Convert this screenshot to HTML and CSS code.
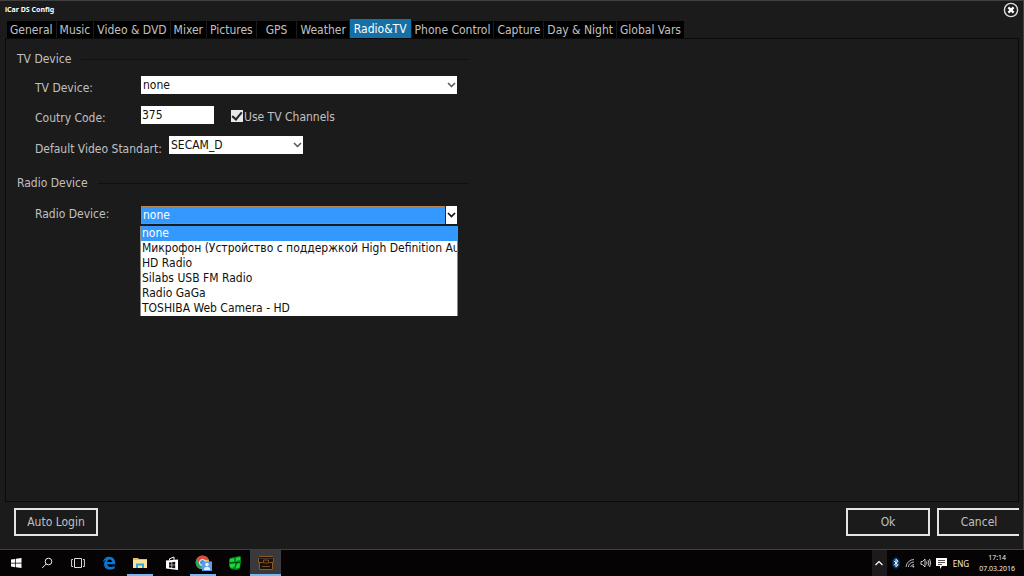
FILE: index.html
```html
<!DOCTYPE html>
<html lang="en">
<head>
<meta charset="utf-8">
<title>iCar DS Config</title>
<link rel="stylesheet" href="styles.css">
</head>
<body>
<main class="window">
  <header class="titlebar">
    <h1 class="title">iCar DS Config</h1>
    <button class="close" type="button" aria-label="Close">
      <svg viewBox="0 0 16 16" width="16" height="16" fill="none"><circle cx="8" cy="8" r="6.6" stroke="#ddd" stroke-width="1.4"/><path d="M5.4 5.4l5.2 5.2M10.6 5.4l-5.2 5.2" stroke="#fff" stroke-width="2.2"/></svg>
    </button>
  </header>
  <nav class="tabs" aria-label="Settings sections">
    <button class="tab" type="button">General</button>
    <button class="tab" type="button">Music</button>
    <button class="tab" type="button">Video &amp; DVD</button>
    <button class="tab" type="button">Mixer</button>
    <button class="tab" type="button">Pictures</button>
    <button class="tab tab-short" type="button">GPS</button>
    <button class="tab" type="button">Weather</button>
    <button class="tab tab-active" type="button" aria-current="page">Radio&amp;TV</button>
    <button class="tab" type="button">Phone Control</button>
    <button class="tab" type="button">Capture</button>
    <button class="tab" type="button">Day &amp; Night</button>
    <button class="tab" type="button">Global Vars</button>
  </nav>
  <section class="panel">
    <h2 class="group-title">TV Device</h2>
    <div class="row">
      <label class="label" for="tv">TV Device:</label>
      <div class="combo">
        <select class="select" id="tv"><option>none</option></select>
        <svg class="chevron" viewBox="0 0 9 6" width="9" height="6"><path d="M1 1l3.5 3.5L8 1" fill="none" stroke="#555" stroke-width="1.5"/></svg>
      </div>
    </div>
    <div class="row">
      <label class="label" for="code">Coutry Code:</label>
      <input class="code" id="code" type="text" value="375">
      <input class="check" id="channels" type="checkbox" checked>
      <label for="channels">Use TV Channels</label>
    </div>
    <div class="row">
      <label class="label label-wide" for="standard">Default Video Standart:</label>
      <div class="combo combo-small">
        <select class="select" id="standard"><option>SECAM_D</option></select>
        <svg class="chevron" viewBox="0 0 9 6" width="9" height="6"><path d="M1 1l3.5 3.5L8 1" fill="none" stroke="#555" stroke-width="1.5"/></svg>
      </div>
    </div>
    <h2 class="group-title group-second">Radio Device</h2>
    <div class="row row-radio">
      <label class="label" for="radio">Radio Device:</label>
      <div class="combo combo-open">
        <select class="select" id="radio"><option>none</option></select>
        <span class="arrow-box"><svg viewBox="0 0 9 6" width="9" height="6"><path d="M1 1l3.5 3.5L8 1" fill="none" stroke="#111" stroke-width="1.7"/></svg></span>
        <ul class="list" role="listbox" aria-label="Radio Device">
          <li class="item item-selected" role="option" aria-selected="true">none</li>
          <li class="item" role="option">Микрофон (Устройство с поддержкой High Definition Audio)</li>
          <li class="item" role="option">HD Radio</li>
          <li class="item" role="option">Silabs USB FM Radio</li>
          <li class="item" role="option">Radio GaGa</li>
          <li class="item" role="option">TOSHIBA Web Camera - HD</li>
        </ul>
      </div>
    </div>
  </section>
  <div class="actions">
    <button class="action" type="button">Auto Login</button>
    <span class="spacer"></span>
    <button class="action" type="button">Ok</button>
    <button class="action action-cut" type="button">Cancel</button>
  </div>
</main>
<footer class="taskbar">
  <button class="task" type="button" aria-label="Start">
    <svg viewBox="0 0 12 12" width="12" height="12" fill="#fff"><path d="M1 2.500l4.300-.6v3.800H1zM6 1.800L11.500 1v4.700H6zM1 6.400h4.300v3.800L1 9.600zM6 6.400h5.500v4.700L6 10.300z"/></svg>
  </button>
  <button class="task" type="button" aria-label="Search">
    <svg viewBox="0 0 12 12" width="12" height="12" fill="none" stroke="#eee"><circle cx="7.500" cy="4.500" r="3.300"/><path d="M5.200 6.900L1.200 11"/></svg>
  </button>
  <button class="task" type="button" aria-label="Task view">
    <svg viewBox="0 0 14 12" width="14" height="12" fill="none" stroke="#ddd"><path d="M3.500 1.500h7v9h-7zM2 2.500H.6v7H2M12 2.500h1.400v7H12"/></svg>
  </button>
  <button class="task" type="button" aria-label="Edge">
    <svg viewBox="0 0 14 14" width="14" height="14"><path d="M1 6.500C1.600 2.500 4.200.8 7.200.8c3.800 0 6 2.800 6 6v1.500H5.100c.2 2 1.800 2.700 3.700 2.700 1.400 0 2.600-.3 3.800-1v2.600c-1.300.6-2.700.9-4.300.9-3.800 0-6.200-2-6.200-5.300 0-2.200 1.100-3.800 3.100-4.700C3.300 4.100 2 4.900 1 6.500zm4.200-.4h4.700c0-1.600-.8-2.500-2.200-2.500-1.500 0-2.300 1-2.500 2.500z" fill="#0878d8"/></svg>
  </button>
  <button class="task task-running" type="button" aria-label="File Explorer">
    <svg viewBox="0 0 14 12" width="14" height="12"><path d="M0 1h5l1 1h8v9H0z" fill="#e9c15a"/><path d="M0 3h14v8H0z" fill="#fbe49a"/><path d="M3 11V6.500h8V11H9V8.500H5V11z" fill="#35a8dc"/></svg>
  </button>
  <button class="task" type="button" aria-label="Store">
    <svg viewBox="0 0 14 14" width="14" height="14"><path d="M4.500 4V2.800L9 1v3" fill="none" stroke="#fff"/><path d="M1 4.500L13 3.500V14L1 12.500z" fill="#fff"/><path d="M4 6.500l2.600-.3v2.500H4zM7.200 6.100l3-.4v3h-3zM4 9.300h2.600v2.500L4 11.500zM7.200 9.300h3v3l-3-.4z" fill="#111"/></svg>
  </button>
  <button class="task task-running" type="button" aria-label="Chrome">
    <svg viewBox="0 0 17 16" width="17" height="16"><circle cx="7.500" cy="7.500" r="6.800" fill="#f2c52e"/><path d="M1.500 4.200A6.800 6.800 0 0 1 13.900 5H7.500L4.600 9z" fill="#df4b40"/><path d="M1.500 4.200L5 10l2.500 1-1.300 3.200A6.800 6.800 0 0 1 1.500 4.200z" fill="#2ca45c"/><circle cx="7.500" cy="7.500" r="3" fill="#4a87e8" stroke="#fff"/><path d="M7 6.500h10V16H7z" fill="#5f9ce8"/><circle cx="12" cy="9.500" r="1.800" fill="#e4effc"/><path d="M8.800 15c0-4.500 6.400-4.500 6.400 0z" fill="#e4effc"/></svg>
  </button>
  <button class="task" type="button" aria-label="Media app">
    <svg viewBox="0 0 14 16" width="14" height="16"><path d="M2 3l5-1 5-1 1 1v5l-1 6-3 2-6-1-2-3V5z" fill="#068a1e"/><path d="M2 4l4-.8v3.300L2 7zM8 3l4-1v3L8 6zM2 9l5-.5v3L4 13l-2-1zM8 8.500h4l-.5 4L8 13.500z" fill="#18d83e"/><path d="M1 8l11-.8M7 12l2-4" stroke="#034d10" fill="none"/></svg>
  </button>
  <button class="task task-current" type="button" aria-label="iCar DS">
    <svg viewBox="0 0 16 16" width="16" height="16"><path d="M1 1h14v2H1zM0 4h16v4h-1v7H1V8H0z" fill="#17100b"/><path d="M1 1.500h14M.5 3.500v4h4M15.500 3.500v4h-4M1.500 7.500v7h13v-7" fill="none" stroke="#8f5826"/><path d="M5.500 5h5v3h-5zM4 11.500h8" fill="none" stroke="#7a4a20"/></svg>
  </button>
  <span class="spacer"></span>
  <div class="tray">
    <button class="tray-up" type="button" aria-label="Show hidden icons">
      <svg viewBox="0 0 8 6" width="8" height="6"><path d="M.5 5L4 1.500 7.500 5" fill="none" stroke="#fff" stroke-width="1.200"/></svg>
    </button>
    <svg viewBox="0 0 8 12" width="8" height="12"><ellipse cx="4" cy="6" rx="3.800" ry="5.800" fill="#073a70"/><path d="M2 3.800L6 7.800 4 9.800V2.200l2 2-4 4" fill="none" stroke="#fff"/></svg>
    <svg viewBox="0 0 10 10" width="10" height="10" fill="none" stroke="#bbb"><path d="M1 9A8 8 0 0 1 9 1.500M3.300 9A6 6 0 0 1 9 4M5.600 9A4 4 0 0 1 9 6.500" /><circle cx="8.300" cy="8.600" r=".6" fill="#fff"/></svg>
    <svg viewBox="0 0 11 10" width="11" height="10" fill="none" stroke="#ccc"><path d="M1 3.500h1.500L5 1v8L2.500 6.500H1zM6.500 3.500q1 1.500 0 3M8 2.200q2 2.800 0 5.600M9.500 1q2.500 4 0 8"/></svg>
    <svg viewBox="0 0 11 11" width="11" height="11"><path d="M0 0h11v8H6L4 11V8H0z" fill="#fff"/><path d="M2 2.500h7M2 4.500h7M2 6.500h4" stroke="#222" stroke-width=".8"/></svg>
    <span class="language">ENG</span>
    <time class="clock" datetime="2016-03-07T17:14"><span>17:14</span><span>07.03.2016</span></time>
  </div>
</footer>
</body>
</html>
```
FILE: styles.css
```css
* { box-sizing: border-box; }
body {
  margin: 0;
  min-height: 100vh;
  display: flex;
  flex-direction: column;
  background: #1b1b1b;
  color: #c0c0c0;
  font: 12px/16px "DejaVu Sans Condensed", "DejaVu Sans", sans-serif;
}
button, input, select { font: inherit; color: inherit; margin: 0; border: 0; border-radius: 0; }
h1, h2, ul { margin: 0; padding: 0; }
svg { display: block; flex: none; }
.window {
  flex: 1;
  display: flex;
  flex-direction: column;
  padding: 0 4px 0 5px;
  border: 1px solid #404040;
  border-width: 1px 1px 1px 0;
}
.titlebar { display: flex; justify-content: space-between; height: 20px; }
.title { color: #fff; font-family: "Noto Sans", sans-serif; font-size: 7px; line-height: 18px; font-weight: 700; }
.close { width: 16px; height: 16px; padding: 0; margin-top: 1px; background: none; }
.tabs { display: flex; gap: 1px; height: 17px; padding-left: 2px; }
.tab { height: 18px; padding: 0 3px; background: #000; white-space: nowrap; line-height: 18px; }
.tab-short { padding: 0 9px; }
.tab-active { background: #1470a5; color: #fff; height: 20px; margin-top: -2px; padding: 0 4px; }
.panel {
  flex: 1;
  border: 1px solid #0a0a0a;
  padding: 12px 11px;
}
.group-title {
  display: flex;
  align-items: center;
  gap: 10px;
  max-width: 452px;
  font-size: 12px;
  font-weight: 400;
  height: 16px;
}
.group-title::after { content: ""; flex: 1; height: 1px; background: #101010; }
.group-second { margin-top: 21px; }
.row { display: flex; height: 18px; margin-top: 12px; padding-left: 18px; max-width: 440px; }
.group-title + .row { margin-top: 9px; }
.group-second + .row-radio { margin-top: 15px; }
.label { width: 106px; padding-top: 4px; white-space: nowrap; }
.row .label-wide { width: 134px; padding-top: 5px; }
.row-radio .label { padding-top: 0; }
.combo { position: relative; flex: 1; height: 18px; }
.combo-small { flex: none; width: 134px; }
.select {
  appearance: none;
  display: block;
  width: 100%;
  height: 18px;
  padding: 0 2px;
  background: #fff;
  color: #111;
  outline: 0;
}
.chevron { position: absolute; right: 1px; top: 6px; pointer-events: none; }
.code { width: 73px; height: 18px; padding: 0 1px; background: #fff; color: #111; }
.check {
  appearance: none;
  width: 12px;
  height: 12px;
  margin: 4px 1px 0 17px;
  background: #e8e8e8;
  display: grid;
  place-items: center;
}
.check:checked::after {
  content: "";
  width: 4px;
  height: 8px;
  border: solid #222;
  border-width: 0 2px 2px 0;
  transform: translateY(-1px) rotate(40deg);
}
.check + label { padding-top: 3px; }
.combo-open .select { background: #3399ff; color: #fff; border: 1px solid #b78350; padding: 0 1px; }
.arrow-box {
  position: absolute;
  right: 0;
  top: 0;
  width: 12px;
  height: 18px;
  display: grid;
  place-items: center;
  background: #fff;
  border-left: 1px solid #222;
  pointer-events: none;
}
.list {
  position: absolute;
  left: -1px;
  right: -1px;
  top: 20px;
  background: #fff;
  color: #111;
  border-left: 1px solid #888;
  border-right: 1px solid #888;
  list-style: none;
}
.item { height: 15px; line-height: 15px; padding-left: 1px; overflow: hidden; white-space: nowrap; }
.item-selected { background: #3399ff; color: #fff; }
.actions { display: flex; gap: 7px; padding: 6px 0 12px 9px; height: 47px; }
.spacer { flex: 1; }
.action { width: 84px; height: 28px; padding: 0; border: 2px solid #e5e5e5; background: none; }
.action-cut { border-right: 0; width: 82px; }
.taskbar { display: flex; height: 26px; background: #050303; color: #eee; }
.task {
  width: 31px;
  height: 26px;
  padding: 2px 0 0;
  display: grid;
  place-items: center;
  background: none;
  border-bottom: 2px solid transparent;
}
.task-running { width: 32px; background: linear-gradient(#76b9ed, #76b9ed) center bottom / 26px 2px no-repeat border-box; }
.task-current { background: #3a3a3c; border-bottom-color: #76b9ed; }
.tray { display: flex; align-items: center; gap: 5px; padding-right: 9px; font-family: "Noto Sans", sans-serif; font-size: 8px; line-height: 11px; }
.tray-up { width: 15px; height: 26px; padding: 0; display: grid; place-items: center; background: #1c1a1a; }
.language { margin: 0 5px 0 1px; }
.clock { display: flex; flex-direction: column; align-items: center; font-size: 7px; }
```
